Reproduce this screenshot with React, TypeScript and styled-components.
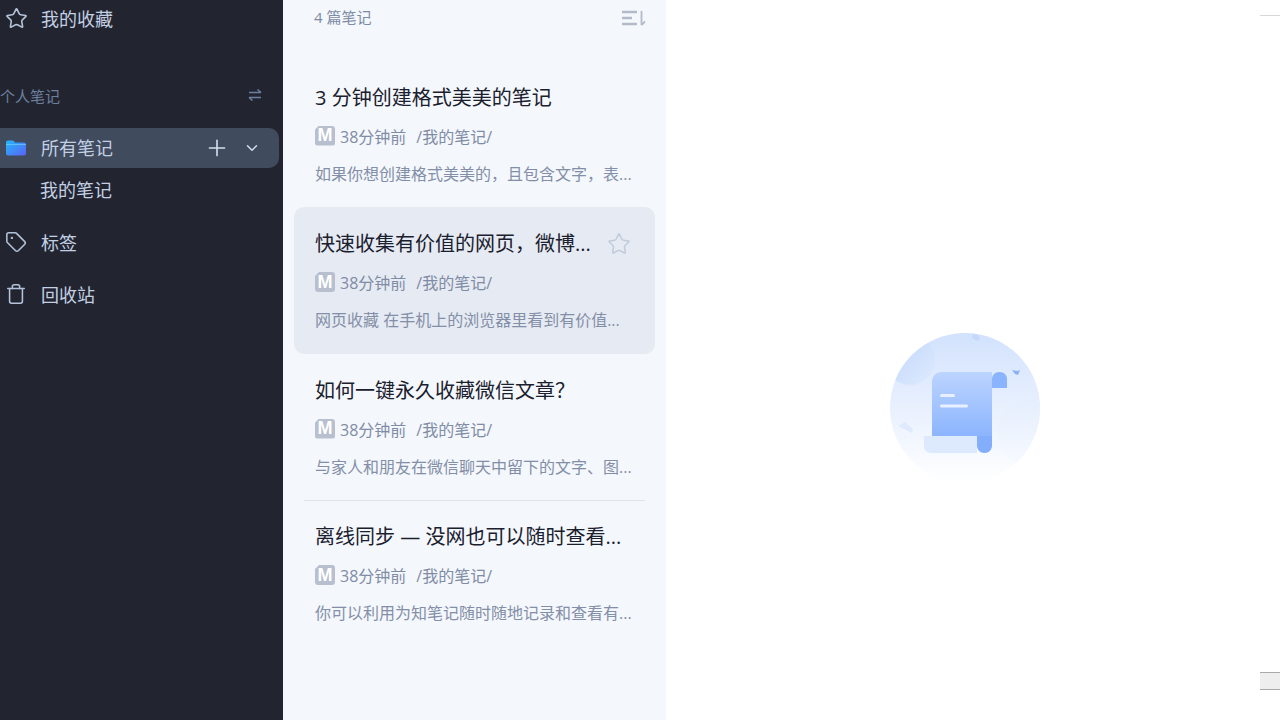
import React from 'react'
import styled, { createGlobalStyle } from 'styled-components'
import { Star, Tag, Trash, Plus, ChevronDown } from 'lucide-react'

const GlobalStyle = createGlobalStyle`
  html, body {
    margin: 0;
    height: 100%;
    overflow: hidden;
  }
  body {
    font-family: 'Open Sans', 'Noto Sans CJK SC', sans-serif;
  }
`

const Page = styled.div`
  display: flex;
  width: 1280px;
  height: 720px;
  overflow: hidden;
  background: white;
`

const Sidebar = styled.aside`
  width: 283px;
  flex-shrink: 0;
  background: #222530;
  color: #c3d0e4;
`

const NavRow = styled.div<{ $top: number }>`
  display: flex;
  align-items: center;
  height: 38px;
  margin-top: ${(props) => props.$top}px;
  padding-left: 4px;
  font-size: 18px;
`

const NavIcon = styled.span`
  display: flex;
  justify-content: center;
  width: 24px;
  margin-right: 13px;
  color: #b4c2d9;
`

const SectionHead = styled.div`
  display: flex;
  align-items: center;
  justify-content: space-between;
  height: 20px;
  margin-top: 48px;
  padding-right: 21px;
  font-size: 15px;
  color: #6d7f9e;
`

const ActiveRow = styled.div`
  display: flex;
  align-items: center;
  width: 279px;
  height: 40px;
  margin-top: 23px;
  padding: 0 18px 0 4px;
  box-sizing: border-box;
  border-radius: 0 10px 10px 0;
  background: #404b5e;
  font-size: 18px;
`

const ActiveLabel = styled.span`
  flex: 1;
  margin-bottom: 2px;
`

const RowAction = styled.span`
  display: flex;
  margin-left: 13px;
  color: #d5deec;
`

const SubRow = styled.div`
  height: 26px;
  line-height: 26px;
  margin-top: 9px;
  padding-left: 40px;
  font-size: 18px;
`

const NoteColumn = styled.section`
  width: 383px;
  flex-shrink: 0;
  background: #f4f7fb;
  padding: 0 11px;
  box-sizing: border-box;
`

const ColumnHead = styled.div`
  display: flex;
  align-items: center;
  justify-content: space-between;
  height: 36px;
  margin-bottom: 24.5px;
  padding: 0 9px 0 20px;
  font-size: 15px;
  color: #7d8ba6;
`

const CountLabel = styled.span`
  margin-bottom: 3px;
`

const NoteCard = styled.article<{ $active?: boolean }>`
  position: relative;
  height: 146.5px;
  padding: 23px 21px 0;
  box-sizing: border-box;
  border-radius: 10px;
  background: ${(props) => (props.$active ? '#e6eaf2' : 'transparent')};
`

const Divider = styled.div`
  position: absolute;
  top: 0;
  left: 10px;
  right: 10px;
  height: 1px;
  background: #e0e4ea;
`

const TitleRow = styled.div`
  display: flex;
  align-items: center;
  justify-content: space-between;
  height: 28px;
`

const NoteTitle = styled.h3`
  margin: 0;
  font-size: 20px;
  font-weight: 400;
  line-height: 28px;
  color: #1a202e;
  white-space: nowrap;
`

const FavStar = styled(Star)`
  margin-right: 3px;
  color: #c2cbdb;
`

const MetaRow = styled.div`
  display: flex;
  align-items: center;
  height: 20px;
  margin-top: 14px;
  font-size: 16px;
  color: #7f8ca6;
`

const MarkBadge = styled.span`
  display: flex;
  align-items: center;
  justify-content: center;
  width: 20px;
  height: 20px;
  margin-right: 5px;
  border-radius: 3px;
  background: #b8c0d0;
  clip-path: polygon(4px 0, 100% 0, 100% 100%, 0 100%, 0 4px);
  color: white;
  font-family: 'Liberation Sans', sans-serif;
  font-size: 18px;
  font-weight: 700;
`

const Folder = styled.span`
  margin-left: 10px;
`

const Preview = styled.p`
  margin: 16px 0 0;
  font-size: 16px;
  line-height: 24px;
  color: #838fa8;
  white-space: nowrap;
`

const Stage = styled.main`
  flex: 1;
  display: flex;
  align-items: center;
  justify-content: center;
  padding: 96px 0 0 4px;
  box-sizing: border-box;
`

const Rail = styled.div`
  display: flex;
  flex-direction: column;
  justify-content: space-between;
  width: 20px;
  flex-shrink: 0;
  padding: 15px 0 30px;
  box-sizing: border-box;
`

const RailLine = styled.div`
  height: 1px;
  background: #d8d8d8;
`

const RailBox = styled.div`
  height: 18px;
  box-sizing: border-box;
  background: #eeeeee;
  border-top: 1px solid #a8a8a8;
  border-bottom: 1px solid #a8a8a8;
`

const FolderIcon = () => (
  <svg width='22' height='18' viewBox='0 0 22 18'>
    <defs>
      <linearGradient id='folderFill' x1='0' y1='0' x2='1' y2='1'>
        <stop offset='0' stopColor='#22b8fb' />
        <stop offset='1' stopColor='#5a63f5' />
      </linearGradient>
    </defs>
    <path
      d='M1 3.5C1 2.2 1.9 1.5 3 1.5h4.5c.8 0 1.3.3 1.8 1l.8 1H19c1.2 0 2 .8 2 2v9c0 1.2-.8 2-2 2H3c-1.2 0-2-.8-2-2z'
      fill='url(#folderFill)'
    />
    <rect x='1' y='5' width='20' height='1' fill='#7fd4ff' opacity='0.6' />
  </svg>
)

const SwapIcon = () => (
  <svg width='14' height='14' viewBox='0 0 14 14' fill='none' stroke='#6d7f9e' strokeWidth='1.6'>
    <path d='M1 4.500h12M9.500 1.500 13 4.500' />
    <path d='M13 9.500H1M4.500 12.500 1 9.500' />
  </svg>
)

const SortIcon = () => (
  <svg width='24' height='16' viewBox='0 0 24 16' fill='none' stroke='#b3bbcb' strokeWidth='2.4'>
    <path d='M0 2h15M0 8h10M0 14h15' />
    <path d='M19.500 1v14' strokeWidth='1.8' />
    <path d='M19.500 15 23 11.500' strokeWidth='1.8' />
  </svg>
)

const Scroll = () => (
  <svg width='150' height='150' viewBox='0 0 150 150'>
    <defs>
      <linearGradient id='disc' x1='0' y1='0' x2='0' y2='1'>
        <stop offset='0' stopColor='#d2e2fd' />
        <stop offset='1' stopColor='#ffffff' />
      </linearGradient>
      <linearGradient id='blobA' x1='0' y1='0' x2='1' y2='1'>
        <stop offset='0' stopColor='#bdd4fb' />
        <stop offset='1' stopColor='#dfebfe' />
      </linearGradient>
      <linearGradient id='blobB' x1='0' y1='0' x2='0' y2='1'>
        <stop offset='0' stopColor='#e4eefd' />
        <stop offset='1' stopColor='#f8faff' />
      </linearGradient>
      <linearGradient id='page' x1='0' y1='0' x2='0' y2='1'>
        <stop offset='0' stopColor='#bcd4fe' />
        <stop offset='1' stopColor='#8cb5fe' />
      </linearGradient>
      <clipPath id='discClip'>
        <circle cx='75' cy='75' r='75' />
      </clipPath>
    </defs>
    <g clipPath='url(#discClip)'>
      <rect width='150' height='150' fill='url(#disc)' />
      <circle cx='20' cy='27' r='25' fill='url(#blobA)' />
      <circle cx='140' cy='100' r='33' fill='url(#blobB)' />
    </g>
    <path d='M83 1l5 1 2 4-3 2-5-3z' fill='#c4d8fb' />
    <path d='M122 37l5 1 3-1-2 5-3-1z' fill='#8cb0f5' />
    <path d='M8 93l7-4 8 7-1 4z' fill='#dfeafd' />
    <path d='M42 103V49c0-6 4-10 10-10h50v64H42z' fill='url(#page)' />
    <path d='M102 55V46c0-4 3-7 7.500-7s7.500 3 7.500 7v9z' fill='#8ab4fd' />
    <path d='M34 103h53v17H41c-4 0-7-3-7-7z' fill='#dde9fd' />
    <path d='M87 103h15v9.500c0 4-3 7.500-7.500 7.500S87 116.500 87 112.500z' fill='#82aefc' />
    <rect x='50' y='61' width='15' height='3' rx='1.500' fill='#e8f0ff' />
    <rect x='50' y='71.500' width='28' height='3' rx='1.500' fill='#e8f0ff' />
  </svg>
)

const notes = [
  { title: '3 分钟创建格式美美的笔记', preview: '如果你想创建格式美美的，且包含文字，表...' },
  { title: '快速收集有价值的网页，微博...', preview: '网页收藏 在手机上的浏览器里看到有价值...', active: true },
  { title: '如何一键永久收藏微信文章？', preview: '与家人和朋友在微信聊天中留下的文字、图...' },
  { title: '离线同步 — 没网也可以随时查看...', preview: '你可以利用为知笔记随时随地记录和查看有...', divider: true },
]

const App = () => {
  return (
    <Page>
      <GlobalStyle />
      <Sidebar>
        <NavRow $top={-1}>
          <NavIcon>
            <Star size={23} strokeWidth={1.7} />
          </NavIcon>
          我的收藏
        </NavRow>
        <SectionHead>
          个人笔记
          <SwapIcon />
        </SectionHead>
        <ActiveRow>
          <NavIcon>
            <FolderIcon />
          </NavIcon>
          <ActiveLabel>所有笔记</ActiveLabel>
          <RowAction>
            <Plus size={26} strokeWidth={1.5} />
          </RowAction>
          <RowAction>
            <ChevronDown size={18} strokeWidth={2} />
          </RowAction>
        </ActiveRow>
        <SubRow>我的笔记</SubRow>
        <NavRow $top={20}>
          <NavIcon>
            <Tag size={22} strokeWidth={1.7} />
          </NavIcon>
          标签
        </NavRow>
        <NavRow $top={14}>
          <NavIcon>
            <Trash size={22} strokeWidth={1.7} />
          </NavIcon>
          回收站
        </NavRow>
      </Sidebar>
      <NoteColumn>
        <ColumnHead>
          <CountLabel>4 篇笔记</CountLabel>
          <SortIcon />
        </ColumnHead>
        {notes.map((note) => (
          <NoteCard key={note.title} $active={note.active}>
            {note.divider && <Divider />}
            <TitleRow>
              <NoteTitle>{note.title}</NoteTitle>
              {note.active && <FavStar size={24} strokeWidth={1.5} />}
            </TitleRow>
            <MetaRow>
              <MarkBadge>M</MarkBadge>
              38分钟前
              <Folder>/我的笔记/</Folder>
            </MetaRow>
            <Preview>{note.preview}</Preview>
          </NoteCard>
        ))}
      </NoteColumn>
      <Stage>
        <Scroll />
      </Stage>
      <Rail>
        <RailLine />
        <RailBox />
      </Rail>
    </Page>
  )
}

export default App
